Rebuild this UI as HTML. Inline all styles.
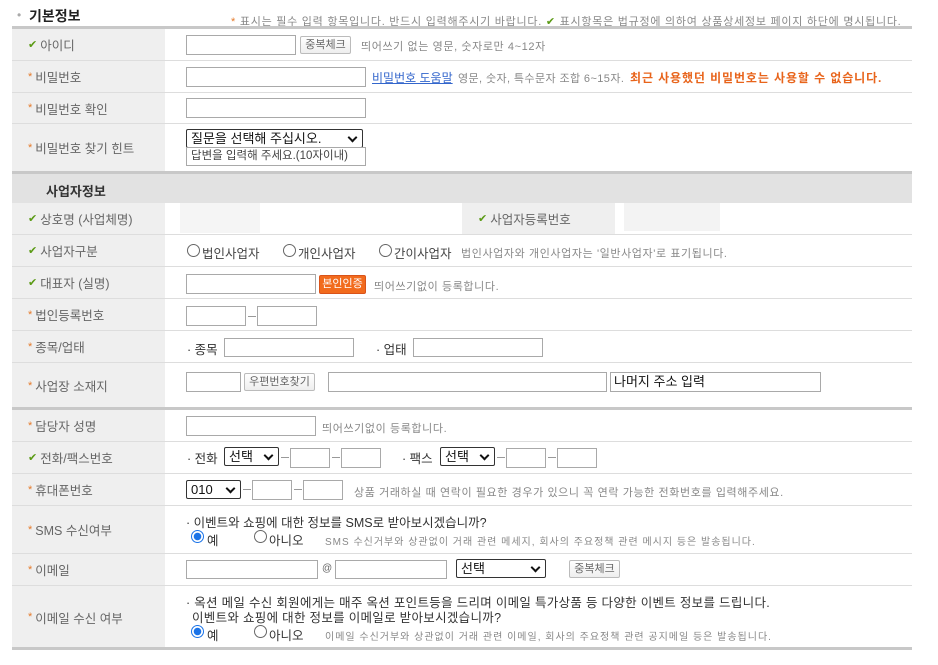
<!DOCTYPE html>
<html><head><meta charset="utf-8"><style>
*{margin:0;padding:0;box-sizing:border-box}
body{width:938px;height:665px;background:#fff;position:relative;overflow:hidden;font-family:"Liberation Sans","Noto Sans CJK KR","NanumGothic",sans-serif;color:#666}
.a{position:absolute;white-space:nowrap}
.row{position:absolute;left:12px;width:900px;border-bottom:1px solid #ddd}
.lab{position:absolute;left:0;top:0;bottom:0;width:153px;background:#efefef;font-size:12.5px;color:#666;padding-left:16px;display:flex;align-items:center}
.lab i{font-style:normal;font-size:11px;margin-right:3px}
.s{color:#e57a2a}.c{color:#5a9a14}
.in{position:absolute;border:1px solid #a9a9a9;background:#fff;height:20px}
.btn{position:absolute;border:1px solid #bbb;border-radius:2px;background:linear-gradient(#fff,#eee);font-size:11px;color:#666;text-align:center;line-height:16px;height:18px}
.sel{position:absolute;border:1px solid #333;border-radius:2px;background:#fff;height:19px;font-size:13px;color:#111;padding-left:4px;line-height:17px}
.sel:after{content:"";position:absolute;right:6px;top:4px;width:5px;height:5px;border-right:2px solid #111;border-bottom:2px solid #111;transform:rotate(45deg)}
.h{font-size:11px;color:#888;letter-spacing:0.6px}
.t{font-size:12.5px;color:#333}
.d{position:absolute;width:8px;height:1px;background:#999}
.r{position:absolute;width:13px;height:13px;border:1px solid #666;border-radius:50%;background:#fff}
.rc{border:1px solid #1a73e8;background:radial-gradient(circle,#1a73e8 3.5px,#fff 4px)}
.thick{position:absolute;left:12px;width:900px;height:3px;background:#c8c8c8}
.sm{font-size:10px;color:#888;letter-spacing:1px}
</style></head><body>
<div class="a" style="left:17px;top:8px;font-size:12px;color:#aaa">•</div>
<div class="a" style="left:29px;top:6px;font-size:14px;font-weight:bold;color:#222">기본정보</div>
<div class="a h" style="left:231px;top:13px;color:#888;letter-spacing:0.75px"><span class="s">*</span> 표시는 필수 입력 항목입니다. 반드시 입력해주시기 바랍니다. <span class="c">✔</span> 표시항목은 법규정에 의하여 상품상세정보 페이지 하단에 명시됩니다.</div>
<div class="thick" style="top:26px"></div>

<div class="row" style="top:29px;height:32px"><div class="lab"><i class="c">✔</i>아이디</div></div>
<div class="in" style="left:186px;top:35px;width:110px"></div>
<div class="btn" style="left:300px;top:36px;width:51px">중복체크</div>
<div class="a h" style="left:361px;top:38px">띄어쓰기 없는 영문, 숫자로만 4~12자</div>

<div class="row" style="top:61px;height:32px"><div class="lab"><i class="s">*</i>비밀번호</div></div>
<div class="in" style="left:186px;top:67px;width:180px"></div>
<div class="a" style="left:372px;top:69px;font-size:12px;color:#3366cc;text-decoration:underline">비밀번호 도움말</div>
<div class="a h" style="left:458px;top:70px;letter-spacing:0.4px">영문, 숫자, 특수문자 조합 6~15자.</div>
<div class="a" style="left:630px;top:69px;font-size:12px;font-weight:bold;color:#e8641b;letter-spacing:0.9px">최근 사용했던 비밀번호는 사용할 수 없습니다.</div>

<div class="row" style="top:93px;height:31px"><div class="lab"><i class="s">*</i>비밀번호 확인</div></div>
<div class="in" style="left:186px;top:98px;width:180px"></div>

<div class="row" style="top:124px;height:47px;border-bottom:none"><div class="lab"><i class="s">*</i>비밀번호 찾기 힌트</div></div>
<div class="sel" style="left:186px;top:129px;width:177px">질문을 선택해 주십시오.</div>
<div class="in" style="left:186px;top:147px;width:180px;height:19px;font-size:11.5px;color:#444;padding-left:4px;line-height:17px">답변을 입력해 주세요.(10자이내)</div>

<div class="thick" style="top:171px"></div>
<div class="a" style="left:12px;top:174px;width:900px;height:29px;background:#e2e2e2"></div>
<div class="a" style="left:46px;top:181px;font-size:13px;font-weight:bold;color:#333">사업자정보</div>

<div class="row" style="top:203px;height:32px"><div class="lab"><i class="c">✔</i>상호명 (사업체명)</div>
<div class="lab" style="left:450px;width:153px;padding-left:16px"><i class="c">✔</i>사업자등록번호</div></div>
<div class="a" style="left:180px;top:203px;width:80px;height:30px;background:#f5f5f5"></div>
<div class="a" style="left:624px;top:203px;width:96px;height:28px;background:#f3f3f3"></div>

<div class="row" style="top:235px;height:32px"><div class="lab"><i class="c">✔</i>사업자구분</div></div>
<div class="r" style="left:187px;top:244px"></div><div class="a t" style="left:202px;top:243px;color:#444">법인사업자</div>
<div class="r" style="left:283px;top:244px"></div><div class="a t" style="left:298px;top:243px;color:#444">개인사업자</div>
<div class="r" style="left:379px;top:244px"></div><div class="a t" style="left:394px;top:243px;color:#444">간이사업자</div>
<div class="a h" style="left:461px;top:245px">법인사업자와 개인사업자는 '일반사업자'로 표기됩니다.</div>

<div class="row" style="top:267px;height:32px"><div class="lab"><i class="c">✔</i>대표자 (실명)</div></div>
<div class="in" style="left:186px;top:274px;width:130px"></div>
<div class="a" style="left:319px;top:275px;width:47px;height:19px;background:#f26b1d;border:1px solid #d9531a;border-radius:2px;color:#fff;font-size:11px;text-align:center;line-height:17px">본인인증</div>
<div class="a h" style="left:374px;top:278px">띄어쓰기없이 등록합니다.</div>

<div class="row" style="top:299px;height:32px"><div class="lab"><i class="s">*</i>법인등록번호</div></div>
<div class="in" style="left:186px;top:306px;width:60px"></div><div class="d" style="left:248px;top:316px"></div>
<div class="in" style="left:257px;top:306px;width:60px"></div>

<div class="row" style="top:331px;height:32px"><div class="lab"><i class="s">*</i>종목/업태</div></div>
<div class="a t" style="left:187px;top:339px">· 종목</div>
<div class="in" style="left:224px;top:338px;width:130px;height:19px"></div>
<div class="a t" style="left:376px;top:339px">· 업태</div>
<div class="in" style="left:413px;top:338px;width:130px;height:19px"></div>

<div class="row" style="top:363px;height:45px;border-bottom:none"><div class="lab"><i class="s">*</i>사업장 소재지</div></div>
<div class="in" style="left:186px;top:372px;width:55px"></div>
<div class="btn" style="left:244px;top:373px;width:71px">우편번호찾기</div>
<div class="in" style="left:328px;top:372px;width:279px"></div>
<div class="in" style="left:610px;top:372px;width:211px;font-size:13px;color:#111;padding-left:3px;line-height:18px">나머지 주소 입력</div>

<div class="thick" style="top:407px"></div>
<div class="row" style="top:410px;height:32px"><div class="lab"><i class="s">*</i>담당자 성명</div></div>
<div class="in" style="left:186px;top:416px;width:130px"></div>
<div class="a h" style="left:322px;top:420px">띄어쓰기없이 등록합니다.</div>

<div class="row" style="top:442px;height:32px"><div class="lab"><i class="c">✔</i>전화/팩스번호</div></div>
<div class="a t" style="left:187px;top:448px">· 전화</div>
<div class="sel" style="left:224px;top:447px;width:55px">선택</div><div class="d" style="left:281px;top:457px"></div>
<div class="in" style="left:290px;top:448px;width:40px"></div><div class="d" style="left:332px;top:457px"></div>
<div class="in" style="left:341px;top:448px;width:40px"></div>
<div class="a t" style="left:402px;top:448px">· 팩스</div>
<div class="sel" style="left:440px;top:447px;width:55px">선택</div><div class="d" style="left:497px;top:457px"></div>
<div class="in" style="left:506px;top:448px;width:40px"></div><div class="d" style="left:548px;top:457px"></div>
<div class="in" style="left:557px;top:448px;width:40px"></div>

<div class="row" style="top:474px;height:32px"><div class="lab"><i class="s">*</i>휴대폰번호</div></div>
<div class="sel" style="left:186px;top:480px;width:55px">010</div><div class="d" style="left:243px;top:489px"></div>
<div class="in" style="left:252px;top:480px;width:40px"></div><div class="d" style="left:294px;top:489px"></div>
<div class="in" style="left:303px;top:480px;width:40px"></div>
<div class="a h" style="left:354px;top:484px">상품 거래하실 때 연락이 필요한 경우가 있으니 꼭 연락 가능한 전화번호를 입력해주세요.</div>

<div class="row" style="top:506px;height:48px"><div class="lab"><i class="s">*</i>SMS 수신여부</div></div>
<div class="a t" style="left:186px;top:512px">· 이벤트와 쇼핑에 대한 정보를 SMS로 받아보시겠습니까?</div>
<div class="r rc" style="left:191px;top:530px"></div><div class="a t" style="left:207px;top:530px">예</div>
<div class="r" style="left:254px;top:530px"></div><div class="a t" style="left:269px;top:530px">아니오</div>
<div class="a sm" style="left:325px;top:533px">SMS 수신거부와 상관없이 거래 관련 메세지, 회사의 주요정책 관련 메시지 등은 발송됩니다.</div>

<div class="row" style="top:554px;height:32px"><div class="lab"><i class="s">*</i>이메일</div></div>
<div class="in" style="left:186px;top:560px;width:132px;height:19px"></div>
<div class="a" style="left:322px;top:563px;font-size:10px;color:#666">@</div>
<div class="in" style="left:335px;top:560px;width:112px;height:19px"></div>
<div class="sel" style="left:456px;top:559px;width:90px">선택</div>
<div class="btn" style="left:569px;top:560px;width:51px">중복체크</div>

<div class="row" style="top:586px;height:62px;border-bottom:none"><div class="lab"><i class="s">*</i>이메일 수신 여부</div></div>
<div class="a t" style="left:186px;top:592px;letter-spacing:0.3px">· 옥션 메일 수신 회원에게는 매주 옥션 포인트등을 드리며 이메일 특가상품 등 다양한 이벤트 정보를 드립니다.</div>
<div class="a t" style="left:192px;top:607px;letter-spacing:0.3px">이벤트와 쇼핑에 대한 정보를 이메일로 받아보시겠습니까?</div>
<div class="r rc" style="left:191px;top:625px"></div><div class="a t" style="left:207px;top:625px">예</div>
<div class="r" style="left:254px;top:625px"></div><div class="a t" style="left:269px;top:625px">아니오</div>
<div class="a sm" style="left:325px;top:628px">이메일 수신거부와 상관없이 거래 관련 이메일, 회사의 주요정책 관련 공지메일 등은 발송됩니다.</div>
<div class="thick" style="top:647px"></div>
</body></html>
